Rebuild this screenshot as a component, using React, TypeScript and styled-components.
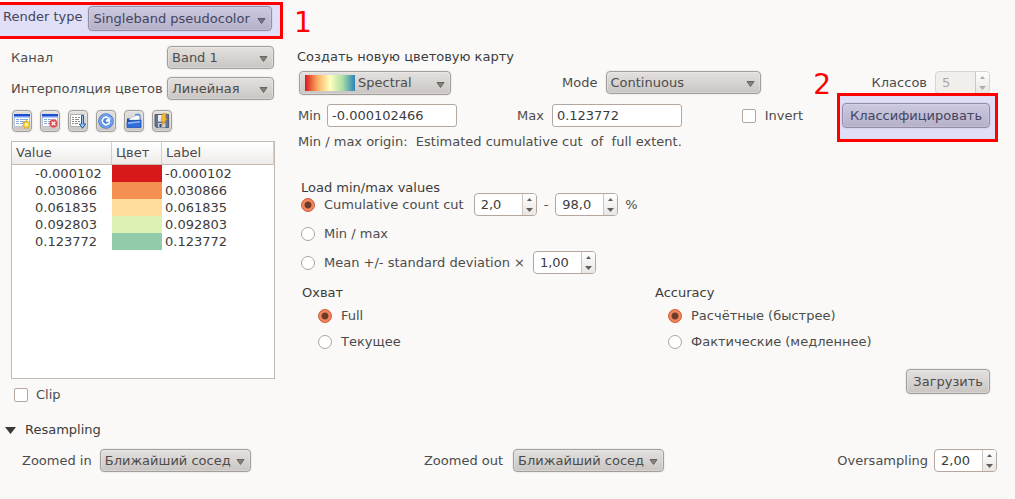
import React from 'react';
import styled, { createGlobalStyle } from 'styled-components';

const GlobalStyle = createGlobalStyle`
  *, *::before, *::after { box-sizing: border-box; }
  body {
    margin: 0;
    background: #faf9f7;
    color: #4c4c4c;
    font: 13px/16px "DejaVu Sans", sans-serif;
  }
  button, input, select { font: inherit; color: inherit; margin: 0; }
  label { white-space: nowrap; }
`;

const raised = `
  border: 1px solid #a29e9a;
  border-radius: 4px;
  background: linear-gradient(#e3e0de, #d6d3d0 50%, #cac5c2);
  box-shadow: inset 0 0 0 1px rgba(255, 255, 255, 0.25), 0 0 1px 1px #f0eeeb;
`;

const Page = styled.main`
  padding-bottom: 24px;
`;

const Header = styled.header`
  display: flex;
  align-items: flex-start;
  height: 40px;
  padding-top: 2px;
`;

const RenderType = styled.div`
  position: relative;
  display: flex;
  align-items: flex-start;
  gap: 6px;
  width: 283px;
  height: 37px;
  padding: 4px 3px;
`;

const RenderLabel = styled.label`
  line-height: 22px;
`;

const Highlight = styled.div<{ $openLeft?: boolean }>`
  position: absolute;
  inset: 0;
  border: 3px solid #f00;
  border-left-width: ${(p) => (p.$openLeft ? 0 : 3)}px;
  background: rgba(0, 0, 255, 0.1);
  pointer-events: none;
`;

const StepNumber = styled.span`
  margin: 5px 0 0 11px;
  color: #f00;
  font-size: 28px;
  line-height: 32px;
`;

const StepBadge = styled(StepNumber)`
  position: absolute;
  right: 100%;
  top: -24px;
  margin: 0 6px 0 0;
`;

const Columns = styled.div`
  display: flex;
  gap: 22px;
  padding: 0 25px 0 11px;
`;

const Palette = styled.section`
  flex: 0 0 264px;
  padding-top: 6px;
`;

const Settings = styled.section`
  flex: 1;
  min-width: 0;
  padding-top: 9px;
`;

const Field = styled.div<{ $wide?: boolean; $gap?: number }>`
  display: flex;
  align-items: center;
  justify-content: ${(p) => (p.$wide ? 'space-between' : 'flex-start')};
  gap: ${(p) => p.$gap ?? 8}px;
`;

const PaletteField = styled(Field)`
  margin-bottom: 8px;
  padding-right: 1px;
`;

const SelectFrame = styled.span<{ $width: number }>`
  position: relative;
  display: flex;
  flex: none;
  width: ${(p) => p.$width}px;
`;

const Select = styled.select<{ $height?: number; $indent?: number }>`
  ${raised}
  appearance: none;
  width: 100%;
  height: ${(p) => p.$height ?? 23}px;
  padding: 0 16px 0 ${(p) => p.$indent ?? 4}px;
`;

const SelectArrow = styled.svg`
  position: absolute;
  right: 6px;
  bottom: 7px;
  width: 9px;
  height: 6px;
  pointer-events: none;
`;

const Ramp = styled.span`
  position: absolute;
  left: 6px;
  top: 4px;
  width: 50px;
  height: 16px;
  background: linear-gradient(90deg, #d7191c, #fdae61 25%, #ffffbf 50%, #abdda4 75%, #2b83ba);
  pointer-events: none;
`;

const Toolbar = styled.div`
  display: flex;
  gap: 8px;
  margin: 10px 0 9px 1px;
`;

const ToolButton = styled.button`
  ${raised}
  display: flex;
  align-items: center;
  justify-content: center;
  width: 20px;
  height: 22px;
  padding: 0;
`;

const PushButton = styled.button`
  ${raised}
  height: 25px;
  padding: 0 6px;
`;

const TableFrame = styled.div`
  height: 238px;
  border: 1px solid #c4bab1;
  background: #fff;
`;

const Table = styled.table`
  width: 100%;
  table-layout: fixed;
  border-collapse: separate;
  border-spacing: 0;
  color: #3c3c3c;
`;

const HeadCell = styled.th<{ $width?: number }>`
  width: ${(p) => (p.$width ? `${p.$width}px` : 'auto')};
  height: 23px;
  padding: 0 4px;
  border-right: 1px solid #d5cec8;
  border-bottom: 1px solid #c4bab1;
  background: linear-gradient(#fff, #f7f6f5 50%, #ecebe8);
  color: #4c4c4c;
  font-weight: normal;
  text-align: left;
`;

const Cell = styled.td<{ $indent: number }>`
  height: 17px;
  padding: 0 0 0 ${(p) => p.$indent}px;
  line-height: 17px;
`;

const ColorCell = styled.td<{ $color: string }>`
  padding: 0;
  background: ${(p) => p.$color};
`;

const Choice = styled.label<{ $gap?: number }>`
  display: flex;
  align-items: center;
  gap: ${(p) => p.$gap ?? 9}px;
`;

const Checkbox = styled.input`
  appearance: none;
  width: 14px;
  height: 14px;
  border: 1px solid #b5a79d;
  border-radius: 2px;
  background: #fff;
  &:checked { background: #f0835b; }
`;

const Radio = styled.input`
  appearance: none;
  width: 14px;
  height: 14px;
  border: 1px solid #aca49d;
  border-radius: 50%;
  background: #fff;
  &:checked {
    border-color: #c9603c;
    background: radial-gradient(circle, #6e3b28 0 3px, #f58a62 4px, #ef7d53 6px);
  }
`;

const TextInput = styled.input`
  width: 130px;
  height: 23px;
  padding: 0 4px;
  border: 1px solid #b5a79d;
  border-radius: 3px;
  background: #fff;
  color: #3c3c3c;
`;

const SpinFrame = styled.span<{ $narrow?: boolean; $disabled?: boolean }>`
  display: flex;
  flex: none;
  width: ${(p) => (p.$narrow ? 55 : 63)}px;
  height: 23px;
  border: 1px solid ${(p) => (p.$disabled ? '#d9d3ce' : '#b5a79d')};
  border-radius: 4px;
  background: ${(p) => (p.$disabled ? '#f1eeeb' : '#fff')};
  color: ${(p) => (p.$disabled ? '#aaa7a4' : '#3c3c3c')};
  overflow: hidden;
`;

const SpinInput = styled.input`
  flex: 1;
  min-width: 0;
  padding: 0 0 0 6px;
  border: 0;
  background: transparent;
`;

const SpinButtons = styled.span`
  display: flex;
  flex-direction: column;
  width: 14px;
  border-left: 1px solid #cfc7c0;
  background: linear-gradient(#fff, #e9e6e3);
`;

const SpinButton = styled.button`
  display: flex;
  flex: 1;
  align-items: center;
  justify-content: center;
  padding: 0;
  border: 0;
  background: transparent;
  color: #625e5b;
  &:disabled { color: #b0aca8; }
`;

const Title = styled.h2<{ $lineHeight?: number }>`
  margin: 0;
  color: #3c3c3c;
  font-size: 13px;
  font-weight: normal;
  line-height: ${(p) => p.$lineHeight ?? 16}px;
`;

const RampRow = styled(Field)`
  height: 24px;
  margin: 6px 0 8px;
  padding-left: 2px;
  align-items: flex-start;
`;

const RangeRow = styled(Field)`
  height: 25px;
  padding-left: 1px;
`;

const RangeFields = styled(Field)`
  flex: 1;
`;

const ClassifySpot = styled.div`
  position: relative;
  margin: -10px -8px -14px 0;
  padding: 10px 8px 14px 5px;
`;

const ClassifyButton = styled(PushButton)`
  display: block;
  width: 148px;
`;

const Origin = styled.p`
  margin: 6px 0 32px;
  padding-left: 1px;
  white-space: pre;
`;

const Limits = styled.div`
  display: flex;
  flex-direction: column;
  gap: 8px;
  padding-left: 4px;
`;

const LimitTitle = styled(Title)`
  padding-left: 4px;
`;

const LimitRow = styled(Field)`
  height: 21px;
`;

const Options = styled.div`
  display: grid;
  grid-template-columns: 1fr 1fr;
  gap: 18px;
  margin: 12px 0 19px;
  padding-left: 5px;
`;

const OptionList = styled.div<{ $indent: number }>`
  display: flex;
  flex-direction: column;
  gap: 10px;
  margin-top: 7px;
  padding-left: ${(p) => p.$indent}px;
`;

const Actions = styled.div`
  display: flex;
  justify-content: flex-end;
`;

const ClipRow = styled.div`
  margin: 9px 0 0 3px;
  height: 14px;
  line-height: 14px;
`;

const FoldButton = styled.button`
  display: flex;
  align-items: center;
  gap: 9px;
  height: 16px;
  margin: 20px 0 11px 5px;
  padding: 0;
  border: 0;
  background: transparent;
  color: #3c3c3c;
`;

const ResamplingRow = styled(Field)`
  padding: 0 18px 0 22px;
`;

function Dropdown(props: {
  id: string;
  width: number;
  height?: number;
  indent?: number;
  options: string[];
  children?: React.ReactNode;
}) {
  return (
    <SelectFrame $width={props.width}>
      <Select id={props.id} $height={props.height} $indent={props.indent}>
        {props.options.map((o) => (
          <option key={o}>{o}</option>
        ))}
      </Select>
      {props.children}
      <SelectArrow viewBox="0 0 9 6">
        <path d="M1 .5h7L4.500 5.500z" fill="#85817e" stroke="#686461" />
      </SelectArrow>
    </SelectFrame>
  );
}

function Spin(props: { id?: string; label?: string; value: string; narrow?: boolean; disabled?: boolean }) {
  return (
    <SpinFrame $narrow={props.narrow} $disabled={props.disabled}>
      <SpinInput id={props.id} aria-label={props.label} defaultValue={props.value} disabled={props.disabled} />
      <SpinButtons>
        <SpinButton type="button" aria-label="+" disabled={props.disabled}>
          <svg width="5" height="3" viewBox="0 0 5 3"><path d="M0 3 2.500 0 5 3z" fill="currentColor" /></svg>
        </SpinButton>
        <SpinButton type="button" aria-label="−" disabled={props.disabled}>
          <svg width="7" height="4" viewBox="0 0 7 4"><path d="M0 0h7L3.500 4z" fill="currentColor" /></svg>
        </SpinButton>
      </SpinButtons>
    </SpinFrame>
  );
}

const sheet = (
  <>
    <path d="M.5 1.500h15v12H.5z" fill="#fff" stroke="#b4c2dc" />
    <path d="M0 1h16v2H0z" fill="#1b4fd0" />
    <path d="M0 3h16v1.500H0z" fill="#6f9cf0" />
    <path d="M2 6.500h3m1 0h8M2 8.500h3m1 0h8M2 10.500h3m1 0h8" stroke="#86a9e0" />
  </>
);

const tools: { name: string; art: React.ReactNode }[] = [
  {
    name: 'Add',
    art: (
      <>
        {sheet}
        <path d="m12.500 7 1 2.600 2.700-.8-1 2.500 1.800 1.500-2.400.7-.2 2.300-1.900-1.300-1.900 1.300-.2-2.300-2.400-.7 1.800-1.500-1-2.500 2.700.8z" fill="#f8cf35" stroke="#d99a10" strokeWidth=".6" />
        <circle cx="12.500" cy="11.800" r="1.700" fill="#fff7b8" />
      </>
    ),
  },
  {
    name: 'Remove',
    art: (
      <>
        {sheet}
        <circle cx="11.500" cy="10.500" r="4.400" fill="#de4a50" stroke="#f3b3b3" strokeWidth=".7" />
        <path d="m9.700 8.700 3.600 3.600m0-3.600-3.600 3.600" stroke="#fff" strokeWidth="1.300" />
      </>
    ),
  },
  {
    name: 'Sort',
    art: (
      <>
        <path d="M.5 1.500h13v12H.5z" fill="#fff" stroke="#b0b0b0" />
        <path d="M2 4.500h2m1 0h2m1 0h2M2 6.500h2m1 0h4M2 8.500h2m1 0h2m1 0h2M2 10.500h2m1 0h3" stroke="#8a8a8a" />
        <path d="M11.500 2.500h2v8.500h2.200L12.500 15.200 9.300 11h2.200z" fill="#8fc4ee" stroke="#1d5f9f" />
      </>
    ),
  },
  {
    name: 'Reload',
    art: (
      <>
        <circle cx="8" cy="8" r="7.300" fill="#4b86e0" stroke="#3a6fcc" strokeWidth=".8" />
        <circle cx="8" cy="8" r="6.200" fill="none" stroke="#a9c8f6" strokeWidth=".8" />
        <path d="M10.500 5A3.800 3.800 0 1 0 11.700 9" fill="none" stroke="#fff" strokeWidth="1.700" />
        <path d="M7.800 8.800V7l4.700-2.800-.4 4.600z" fill="#fff" />
      </>
    ),
  },
  {
    name: 'Open',
    art: (
      <>
        <path d="M1 5.500h4l1-1h8.500V14H1z" fill="#1743a6" />
        <path d="M3 7 5 4.500l8-2.500 1 5z" fill="#fff" stroke="#9db8e2" strokeWidth=".6" />
        <path d="M9 2c2.500-1.500 4.500-.5 5.500 1.500" fill="none" stroke="#4380dd" strokeWidth="1.200" />
        <path d="M1 8.500 15 7v7.500H1z" fill="#2f6fdd" stroke="#174da9" strokeWidth=".7" />
        <path d="m2 9.300 12-1.300v1.500L2 11z" fill="#8db6f5" />
      </>
    ),
  },
  {
    name: 'Save',
    art: (
      <>
        <path d="M1 1.500h13.500v13H2.500L1 13z" fill="#66738f" stroke="#414c68" strokeWidth=".8" />
        <path d="M4 2h7.500v6.500H4z" fill="#e8edf6" />
        <path d="M4 10h7.500v4.500H4z" fill="#c6ccd8" />
        <path d="M5.500 11h2v3h-2z" fill="#3c4662" />
        <path d="m8.500.8 3.800-.3L11 5l1.800.8L8 12.500 8.700 8 7.200 7.300z" fill="#f7b92b" stroke="#d08f16" strokeWidth=".6" />
      </>
    ),
  },
];

const classes = [
  ['-0.000102', '#d7191c'],
  ['0.030866', '#f59053'],
  ['0.061835', '#ffdd9a'],
  ['0.092803', '#ddf1b4'],
  ['0.123772', '#91cba9'],
];

export default function App() {
  return (
    <Page>
      <GlobalStyle />
      <Header>
        <RenderType>
          <RenderLabel htmlFor="render">Render type</RenderLabel>
          <Dropdown id="render" width={184} height={25} options={['Singleband pseudocolor']} />
          <Highlight $openLeft />
        </RenderType>
        <StepNumber>1</StepNumber>
      </Header>

      <Columns>
        <Palette>
          <PaletteField $wide>
            <label htmlFor="band">Канал</label>
            <Dropdown id="band" width={107} options={['Band 1']} />
          </PaletteField>
          <PaletteField $wide $gap={4}>
            <label htmlFor="interpolation">Интерполяция цветов</label>
            <Dropdown id="interpolation" width={107} options={['Линейная']} />
          </PaletteField>
          <Toolbar>
            {tools.map((t) => (
              <ToolButton key={t.name} type="button" aria-label={t.name}>
                <svg width="16" height="16" viewBox="0 0 16 16">{t.art}</svg>
              </ToolButton>
            ))}
          </Toolbar>
          <TableFrame>
            <Table>
              <thead>
                <tr>
                  <HeadCell $width={100}>Value</HeadCell>
                  <HeadCell $width={50}>Цвет</HeadCell>
                  <HeadCell>Label</HeadCell>
                </tr>
              </thead>
              <tbody>
                {classes.map(([value, color]) => (
                  <tr key={value}>
                    <Cell $indent={23}>{value}</Cell>
                    <ColorCell $color={color} />
                    <Cell $indent={3}>{value}</Cell>
                  </tr>
                ))}
              </tbody>
            </Table>
          </TableFrame>
          <ClipRow>
            <Choice $gap={8}>
              <Checkbox type="checkbox" />
              Clip
            </Choice>
          </ClipRow>
        </Palette>

        <Settings>
          <Title>Создать новую цветовую карту</Title>
          <RampRow $wide>
            <Dropdown id="ramp" width={152} height={24} indent={58} options={['Spectral']}>
              <Ramp />
            </Dropdown>
            <Field>
              <label htmlFor="mode">Mode</label>
              <Dropdown id="mode" width={155} options={['Continuous']} />
            </Field>
            <Field>
              <label htmlFor="classes">Классов</label>
              <Spin id="classes" value="5" narrow disabled />
            </Field>
          </RampRow>
          <RangeRow $gap={34}>
            <RangeFields $wide>
              <Field $gap={6}>
                <label htmlFor="min">Min</label>
                <TextInput id="min" defaultValue="-0.000102466" />
              </Field>
              <Field>
                <label htmlFor="max">Max</label>
                <TextInput id="max" defaultValue="0.123772" />
              </Field>
              <Choice>
                <Checkbox type="checkbox" />
                Invert
              </Choice>
            </RangeFields>
            <ClassifySpot>
              <ClassifyButton type="button">Классифицировать</ClassifyButton>
              <Highlight />
              <StepBadge>2</StepBadge>
            </ClassifySpot>
          </RangeRow>
          <Origin>Min / max origin:  Estimated cumulative cut  of  full extent.</Origin>

          <LimitTitle $lineHeight={12}>Load min/max values</LimitTitle>
          <Limits>
            <LimitRow $gap={10}>
              <Choice>
                <Radio type="radio" name="limits" defaultChecked />
                Cumulative count cut
              </Choice>
              <Field $gap={7}>
                <Spin label="Lower cut" value="2,0" />
                <span>-</span>
                <Spin label="Upper cut" value="98,0" />
                <span>%</span>
              </Field>
            </LimitRow>
            <LimitRow>
              <Choice>
                <Radio type="radio" name="limits" />
                Min / max
              </Choice>
            </LimitRow>
            <LimitRow>
              <Choice>
                <Radio type="radio" name="limits" />
                Mean +/- standard deviation ×
              </Choice>
              <Spin label="Standard deviations" value="1,00" />
            </LimitRow>
          </Limits>

          <Options>
            <div>
              <Title>Охват</Title>
              <OptionList $indent={16}>
                <Choice>
                  <Radio type="radio" name="extent" defaultChecked />
                  Full
                </Choice>
                <Choice>
                  <Radio type="radio" name="extent" />
                  Текущее
                </Choice>
              </OptionList>
            </div>
            <div>
              <Title>Accuracy</Title>
              <OptionList $indent={13}>
                <Choice>
                  <Radio type="radio" name="accuracy" defaultChecked />
                  Расчётные (быстрее)
                </Choice>
                <Choice>
                  <Radio type="radio" name="accuracy" />
                  Фактические (медленнее)
                </Choice>
              </OptionList>
            </div>
          </Options>
          <Actions>
            <PushButton type="button">Загрузить</PushButton>
          </Actions>
        </Settings>
      </Columns>

      <FoldButton type="button" aria-expanded="true">
        <svg width="11" height="7" viewBox="0 0 11 7"><path d="M0 0h11L5.500 7z" fill="#3a3838" /></svg>
        Resampling
      </FoldButton>
      <ResamplingRow $wide>
        <Field>
          <label htmlFor="zoomed-in">Zoomed in</label>
          <Dropdown id="zoomed-in" width={151} options={['Ближайший сосед']} />
        </Field>
        <Field $gap={10}>
          <label htmlFor="zoomed-out">Zoomed out</label>
          <Dropdown id="zoomed-out" width={151} options={['Ближайший сосед']} />
        </Field>
        <Field $gap={6}>
          <label htmlFor="oversampling">Oversampling</label>
          <Spin id="oversampling" value="2,00" />
        </Field>
      </ResamplingRow>
    </Page>
  );
}
